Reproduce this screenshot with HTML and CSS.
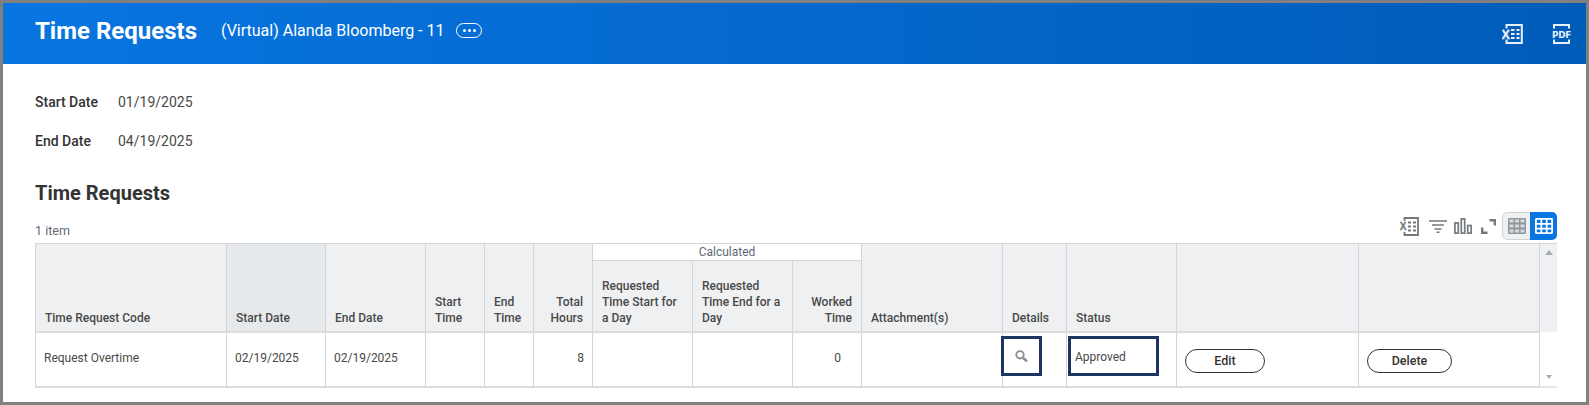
FILE: index.html
```html
<!DOCTYPE html>
<html lang="en">
<head>
<meta charset="utf-8">
<title>Time Requests</title>
<link rel="stylesheet" href="styles.css">
</head>
<body>
<div class="frame">
  <header class="banner">
    <h1 class="banner-title">Time Requests</h1>
    <span class="banner-sub">(Virtual) Alanda Bloomberg - 11</span>
    <span class="more-pill"><i></i><i></i><i></i></span>
    <div class="banner-actions">
      <svg class="banner-icon-xls" width="21" height="20" viewBox="0 0 21 20" fill="none" stroke="#e8f0fa" stroke-width="2">
        <path d="M4.500 4.500V1H19.800V19H4.500V15.500"/>
        <path d="M9 6h3.500M14.500 6h3M9 10h3.500M14.500 10h3M9 14h3.500M14.500 14h3" stroke-width="2"/>
        <text class="icon-letter" x="-.5" y="14.500" fill="#e8f0fa" stroke="#e8f0fa" stroke-width=".4">X</text>
      </svg>
      <svg class="banner-icon-pdf" width="19" height="20" viewBox="0 0 19 20" fill="none" stroke="#e8f0fa" stroke-width="2">
        <path d="M2 4.500V1H17V4.500M2 15.500V19H17V15.500"/>
        <text class="icon-pdf" x="0" y="13.800" fill="#e8f0fa" stroke="none">PDF</text>
      </svg>
    </div>
  </header>
  <main class="content">
    <div class="field field-start"><span class="field-label">Start Date</span><span class="field-value">01/19/2025</span></div>
    <div class="field field-end"><span class="field-label">End Date</span><span class="field-value">04/19/2025</span></div>
    <h2 class="section-title">Time Requests</h2>
    <div class="toolbar">
      <span class="count">1 item</span>
      <div class="tools">
        <svg class="tool tool-xls" width="19" height="19" viewBox="0 0 19 19" fill="none" stroke="#74797e" stroke-width="1.800">
          <path d="M4.500 4V1H18V18H4.500V15"/>
          <path d="M8 5.500h3M13 5.500h3M8 9.500h3M13 9.500h3M8 13.500h3M13 13.500h3" stroke-width="1.800"/>
          <text class="icon-letter-small" x="-.3" y="13" fill="#74797e" stroke="#74797e" stroke-width=".3">X</text>
        </svg>
        <svg class="tool tool-filter" width="18" height="13" viewBox="0 0 18 13" fill="none" stroke="#74797e" stroke-width="1.600">
          <path d="M0 1h18M3 5h12M5.500 9h7M7.500 12.200h3"/>
        </svg>
        <svg class="tool tool-chart" width="18" height="16" viewBox="0 0 18 16" fill="none" stroke="#74797e" stroke-width="1.700">
          <rect x=".9" y="5" width="3.400" height="10.100"/><rect x="7.300" y=".9" width="3.400" height="14.200"/><rect x="13.700" y="7.500" width="3.400" height="7.600"/>
        </svg>
        <svg class="tool tool-expand" width="15" height="15" viewBox="0 0 15 15" fill="none" stroke="#74797e" stroke-width="2.400">
          <path d="M8.500 1.200h5.300v5.300M1.200 8.500v5.300h5.300"/>
        </svg>
        <div class="view-toggle">
          <span class="view-btn view-off">
            <svg width="18" height="16" viewBox="0 0 18 16" fill="#8e979f"><rect width="18" height="16" rx="1"/><path fill="#d6dadd" d="M1.500 1.500h4v3h-4zM7 1.500h4v3H7zM12.500 1.500h4v3h-4zM1.500 6.500h4v3h-4zM7 6.500h4v3H7zM12.500 6.500h4v3h-4zM1.500 11.500h4v3h-4zM7 11.500h4v3H7zM12.500 11.500h4v3h-4z"/></svg>
          </span>
          <span class="view-btn view-on">
            <svg width="18" height="16" viewBox="0 0 18 16" fill="none" stroke="#fff" stroke-width="1.800"><rect x=".9" y=".9" width="16.200" height="14.200" rx=".5"/><path d="M.9 5.900h16.200M.9 10.700h16.200M6.300.9v14.200M11.700.9v14.200"/></svg>
          </span>
        </div>
      </div>
    </div>
    <div class="grid-wrap">
      <table class="grid">
        <colgroup>
          <col class="w191"><col class="w99"><col class="w100"><col class="w59"><col class="w49"><col class="w59"><col class="w100"><col class="w100"><col class="w69"><col class="w141"><col class="w64"><col class="w110"><col class="w182"><col class="w181">
        </colgroup>
        <thead>
          <tr class="group-row">
            <th rowspan="2">Time Request Code</th>
            <th rowspan="2" class="sorted">Start Date</th>
            <th rowspan="2">End Date</th>
            <th rowspan="2">Start Time</th>
            <th rowspan="2">End Time</th>
            <th rowspan="2" class="num">Total Hours</th>
            <th colspan="3" class="group">Calculated</th>
            <th rowspan="2">Attachment(s)</th>
            <th rowspan="2">Details</th>
            <th rowspan="2">Status</th>
            <th rowspan="2"></th>
            <th rowspan="2"></th>
          </tr>
          <tr class="sub-row">
            <th>Requested Time Start for a Day</th>
            <th>Requested Time End for a Day</th>
            <th class="num">Worked Time</th>
          </tr>
        </thead>
        <tbody>
          <tr>
            <td>Request Overtime</td>
            <td>02/19/2025</td>
            <td>02/19/2025</td>
            <td></td>
            <td></td>
            <td class="num">8</td>
            <td></td>
            <td></td>
            <td class="num worked">0</td>
            <td></td>
            <td class="mark-cell">
              <span class="mark mark-details"></span>
              <svg class="search" width="13" height="12" viewBox="0 0 13 12" fill="none" stroke="#8b8f93"><circle cx="5" cy="4.800" r="3.700" stroke-width="1.900"/><path d="M8 7.800l4 3.600" stroke-width="2.600"/></svg>
            </td>
            <td class="mark-cell status"><span class="mark mark-status"></span>Approved</td>
            <td class="btn-cell"><button class="pill pill-edit">Edit</button></td>
            <td class="btn-cell"><button class="pill pill-delete">Delete</button></td>
          </tr>
        </tbody>
      </table>
      <div class="scrollbar">
        <div class="scroll-head"><span class="arrow-up"></span></div>
        <div class="scroll-body"><span class="arrow-down"></span></div>
      </div>
    </div>
  </main>
</div>
</body>
</html>
```

FILE: styles.css
```css
* { box-sizing: border-box; }
html, body { margin: 0; padding: 0; background: #fff; }
body { font-family: Roboto, "Liberation Sans", sans-serif; color: #333; }
.frame { width: 1589px; height: 405px; border: 3px solid #808080; overflow: hidden; background: #fff; }

.banner { height: 61px; display: flex; align-items: center; padding: 0 15px 0 32px; background: linear-gradient(90deg, #0875e1 0%, #005cb9 100%); color: #fff; }
.banner-title { margin: -5px 0 0; font-size: 24px; font-weight: 700; line-height: 30px; }
.banner-sub { margin: -5px 0 0 24px; font-size: 16px; line-height: 24px; }
.more-pill { margin: -6px 0 0 12px; width: 26px; height: 15px; border: 1.500px solid #fff; border-radius: 8px; display: flex; align-items: center; justify-content: center; gap: 2px; }
.more-pill i { width: 3px; height: 3px; border-radius: 50%; background: #fff; }
.banner-actions { margin-left: auto; display: flex; gap: 29px; align-items: center; }
.icon-letter { font: 700 12.500px "Liberation Sans", sans-serif; }
.icon-pdf { font: 700 8.800px "DejaVu Sans", sans-serif; letter-spacing: -.3px; }
.icon-letter-small { font: 700 10px "Liberation Sans", sans-serif; }

.content { padding: 0 29px 0 32px; }
.field { display: flex; font-size: 14px; line-height: 20px; }
.field-start { padding-top: 28px; }
.field-end { padding-top: 19px; }
.field-label { width: 83px; font-weight: 500; color: #333; }
.field-value { color: #494949; }
.section-title { margin: 29px 0 0; font-size: 20px; font-weight: 700; line-height: 26px; color: #333; }

.toolbar { height: 28px; margin-top: 6px; display: flex; align-items: flex-end; justify-content: space-between; }
.count { font-size: 12.500px; line-height: 16px; color: #5e6a75; margin-bottom: 1px; }
.tools { display: flex; align-items: center; height: 28px; }
.tool-filter { margin-left: 10px; }
.tool-chart { margin-left: 7px; }
.tool-expand { margin-left: 9px; }
.view-toggle { margin-left: 6px; width: 55px; height: 28px; display: flex; border-radius: 5px; overflow: hidden; }
.view-btn { display: flex; align-items: center; justify-content: center; }
.view-off { width: 28px; background: #eef0f2; border: 1px solid #ced3d8; border-right: 0; border-radius: 5px 0 0 5px; }
.view-on { width: 27px; background: #0875e1; }

.grid-wrap { margin-top: 3px; display: flex; width: 1522px; }
.grid { width: 1505px; table-layout: fixed; border-collapse: separate; border-spacing: 0; font-size: 12px; line-height: 16px; border-top: 1px solid #d3d5d8; border-left: 1px solid #d3d5d8; }
.w191 { width: 191px; } .w99 { width: 99px; } .w59 { width: 59px; } .w49 { width: 49px; } .w100 { width: 100px; } .w69 { width: 69px; } .w141 { width: 141px; } .w64 { width: 64px; } .w110 { width: 110px; } .w182 { width: 182px; } .w181 { width: 181px; }
.grid th { background: #eff0f1; font-weight: 500; color: #494949; text-align: left; vertical-align: bottom; padding: 0 9px 5px 9px; border-right: 1px solid #d3d5d8; border-bottom: 2px solid #dadcde; }
.grid th.sorted { background: #e6e9eb; }
.group-row { height: 16px; }
.grid th.group { background: #fff; color: #5e6a75; font-weight: 400; text-align: center; vertical-align: middle; padding: 0; height: 16px; border-bottom: 1px solid #d3d5d8; }
.sub-row { height: 72px; }
.grid th.num, .grid td.num { text-align: right; }
.grid td { height: 55px; padding: 0 8px 4px; color: #494949; vertical-align: middle; border-right: 1px solid #d3d5d8; border-bottom: 2px solid #dadcde; }
.grid td.num { padding-right: 8px; }
.grid td.worked { padding-right: 20px; }
.mark-cell { position: relative; }
.mark { position: absolute; top: 3px; height: 40px; border: 3px solid #1d3461; }
.mark-details { left: -2px; width: 41px; }
.mark-status { left: 1px; width: 91px; }
.search { display: block; margin: 0 0 3px 11px; }
.grid td.mark-cell { padding-left: 1px; }
.grid td.mark-cell.status { padding: 0 0 5px 8px; }
.grid td.btn-cell { padding: 2px 0 0 8px; }
.pill { display: block; height: 24px; padding: 0; background: #fff; border: 1px solid #333; border-radius: 12px; font: 500 12.500px/20px Roboto, "Liberation Sans", sans-serif; color: #333; }
.pill-edit { width: 80px; }
.pill-delete { width: 85px; }

.scrollbar { width: 17px; display: flex; flex-direction: column; }
.scroll-head { height: 89px; background: #eff0f1; display: flex; justify-content: center; padding-top: 6px; border-top: 1px solid #d3d5d8; }
.scroll-body { flex: 1; display: flex; justify-content: center; align-items: flex-end; padding-bottom: 7px; border-bottom: 2px solid #e4e6e8; }
.arrow-up { width: 0; height: 0; border-left: 4px solid transparent; border-right: 4px solid transparent; border-bottom: 5px solid #a9adb1; }
.arrow-down { width: 0; height: 0; border-left: 3px solid transparent; border-right: 3px solid transparent; border-top: 4px solid #a9adb1; }
```
